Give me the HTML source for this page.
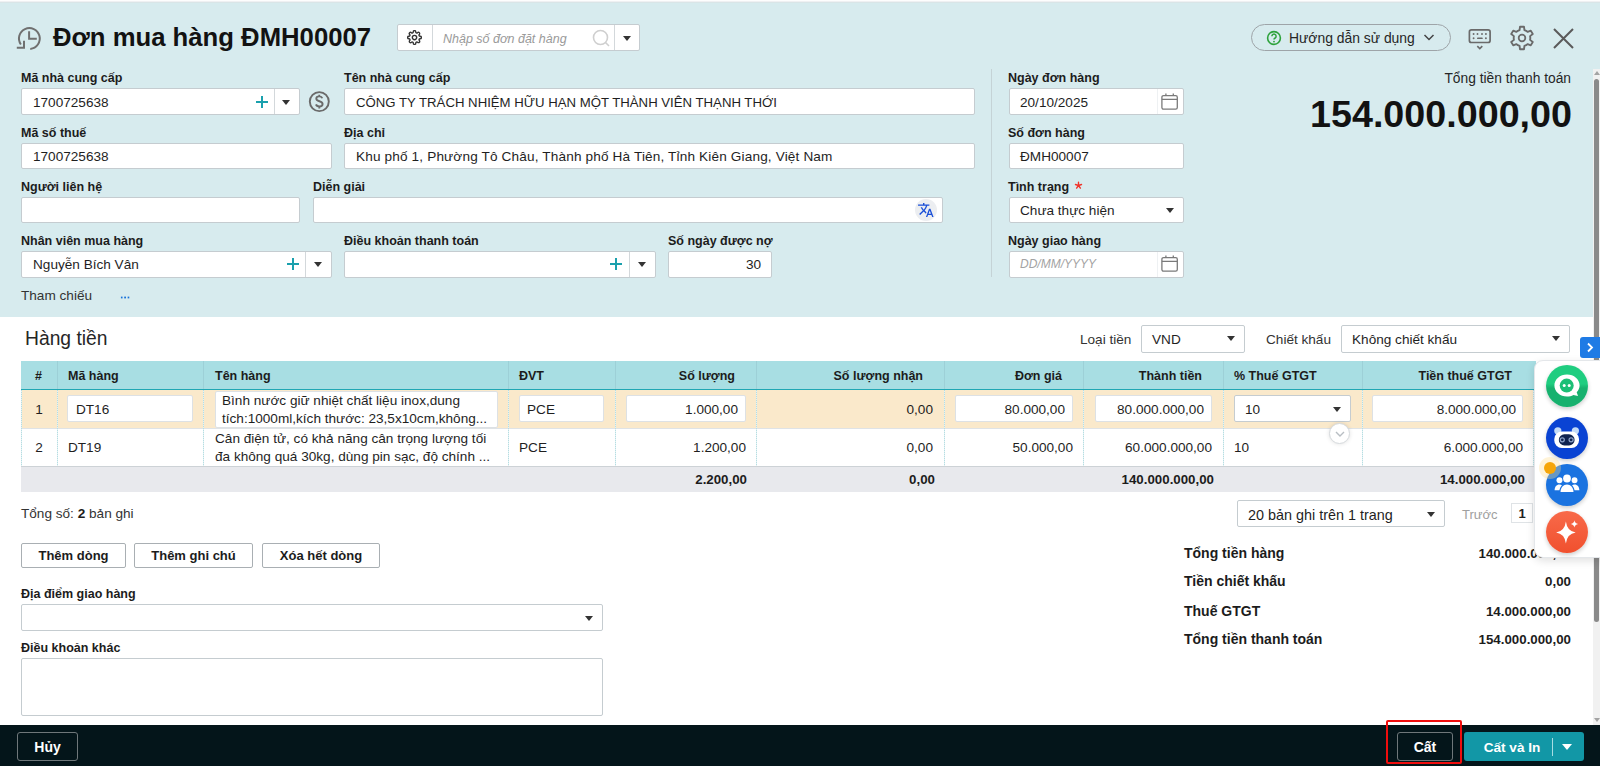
<!DOCTYPE html>
<html><head><meta charset="utf-8">
<style>
*{box-sizing:border-box;margin:0;padding:0}
html,body{width:1600px;height:766px;overflow:hidden;background:#fff;font-family:"Liberation Sans",sans-serif;color:#212121}
.a{position:absolute}
#top{left:0;top:0;width:1600px;height:3px;background:linear-gradient(#fdfdfd 0,#fdfdfd 1px,#eff0f2 1px,#eff0f2 2px,#d9e5e7 2px,#d9e5e7 3px)}
#hdr{left:0;top:3px;width:1600px;height:314px;background:#d7ebee}
.lbl{position:absolute;font-weight:bold;font-size:12.5px;line-height:16px;color:#1c1c1c;white-space:nowrap}
.inp{position:absolute;background:#fff;border:1px solid #c5ccd0;border-radius:2px;height:27px}
.txt{position:absolute;font-size:13.6px;line-height:18px;margin-top:1px;color:#1f1f1f;white-space:nowrap}
.tri{position:absolute;width:0;height:0;border-left:4.5px solid transparent;border-right:4.5px solid transparent;border-top:5px solid #333;margin:1px 0 0 .5px}
.vd{position:absolute;top:0;width:1px;height:25px;background:#d3d8db}
.plus{position:absolute;width:12px;height:12px;margin:1px}
.plus:before{content:"";position:absolute;left:5px;top:0;width:2px;height:12px;background:#1aa0ad}
.plus:after{content:"";position:absolute;left:0;top:5px;width:12px;height:2px;background:#1aa0ad}
.th{position:absolute;top:1px;height:28px;line-height:28px;font-weight:bold;font-size:12.5px;color:#1c1c1c;white-space:nowrap}
.cd{position:absolute;width:1px;background:repeating-linear-gradient(#b5dde2 0 1px,#e3f2f4 1px 2px)}
.cell{position:absolute;font-size:13.6px;color:#1f1f1f;white-space:nowrap}
.cin{position:absolute;background:#fff;border:1px solid #dde1e4;border-radius:2px;height:27px}
.sum{position:absolute;font-weight:bold;font-size:13.3px;color:#1c1c1c;white-space:nowrap}
.btn{position:absolute;height:25px;border:1px solid #a9afb3;border-radius:2px;background:#fff;font-weight:bold;font-size:13px;line-height:23px;text-align:center;color:#1c1c1c}
.slbl{position:absolute;font-weight:bold;font-size:14px;color:#1c1c1c;white-space:nowrap;left:1184px}
.sval{position:absolute;font-weight:bold;font-size:13.3px;color:#1c1c1c;white-space:nowrap;right:29px}
</style></head>
<body>
<div id="top" class="a"></div>
<div id="hdr" class="a"></div>

<!-- title -->
<svg class="a" style="left:15px;top:24px" width="28" height="28" viewBox="0 0 28 28">
 <path d="M5.85 20.5 A10.4 10.4 0 1 1 15.25 24.9" fill="none" stroke="#707070" stroke-width="2"/>
 <path d="M14.1 7.3 V14.8 H21.8" fill="none" stroke="#707070" stroke-width="2"/>
 <path d="M1.8 23.8 H9 V16.7" fill="none" stroke="#707070" stroke-width="2"/>
</svg>
<div class="a" style="left:53px;top:21px;font-size:25.7px;font-weight:bold;line-height:32px;color:#121212;white-space:nowrap">Đơn mua hàng ĐMH00007</div>

<!-- search group -->
<div class="inp" style="left:397px;top:24px;width:243px;height:27px"></div>
<div class="a" style="left:432px;top:25px;width:1px;height:25px;background:#d3d8db"></div>
<div class="a" style="left:614px;top:25px;width:1px;height:25px;background:#d3d8db"></div>
<svg class="a" style="left:407px;top:30px" width="15" height="15" viewBox="0 0 24 24"><path fill="none" stroke="#333" stroke-width="2.2" d="M12 15.5a3.5 3.5 0 1 0 0-7 3.5 3.5 0 0 0 0 7zM19.4 15a1.65 1.65 0 0 0 .33 1.82l.06.06a2 2 0 1 1-2.83 2.83l-.06-.06a1.65 1.65 0 0 0-1.82-.33 1.65 1.65 0 0 0-1 1.51V21a2 2 0 1 1-4 0v-.09A1.65 1.65 0 0 0 9 19.4a1.65 1.65 0 0 0-1.82.33l-.06.06a2 2 0 1 1-2.83-2.83l.06-.06A1.650 1.65 0 0 0 4.68 15a1.65 1.65 0 0 0-1.51-1H3a2 2 0 1 1 0-4h.09A1.65 1.65 0 0 0 4.6 9a1.65 1.65 0 0 0-.33-1.82l-.06-.06a2 2 0 1 1 2.83-2.83l.06.06A1.65 1.65 0 0 0 9 4.68a1.65 1.65 0 0 0 1-1.51V3a2 2 0 1 1 4 0v.09a1.65 1.65 0 0 0 1 1.51 1.65 1.65 0 0 0 1.82-.33l.06-.06a2 2 0 1 1 2.83 2.83l-.06.06A1.65 1.65 0 0 0 19.4 9a1.65 1.65 0 0 0 1.51 1H21a2 2 0 1 1 0 4h-.09a1.65 1.65 0 0 0-1.51 1z"/></svg>
<div class="a" style="left:443px;top:30px;font-size:12.5px;font-style:italic;color:#9a9a9a;line-height:18px;white-space:nowrap">Nhập số đơn đặt hàng</div>
<svg class="a" style="left:592px;top:29px" width="20" height="20" viewBox="0 0 20 20"><circle cx="8.5" cy="8.5" r="7" fill="none" stroke="#cfcfcf" stroke-width="1.6"/><path d="M13.5 13.5 L17 17" stroke="#cfcfcf" stroke-width="1.6"/></svg>
<div class="tri" style="left:622px;top:35px"></div>

<!-- help pill -->
<div class="a" style="left:1251px;top:24px;width:200px;height:27px;border:1px solid #9ea4a8;border-radius:14px"></div>
<svg class="a" style="left:1266px;top:30px" width="16" height="16" viewBox="0 0 16 16"><circle cx="8" cy="8" r="6.4" fill="none" stroke="#2ea23c" stroke-width="1.6"/><path d="M5.9 6.2a2.1 2.1 0 1 1 3.2 1.8c-.7.4-1.1.8-1.1 1.6" fill="none" stroke="#2ea23c" stroke-width="1.5"/><circle cx="8" cy="11.6" r=".9" fill="#2ea23c"/></svg>
<div class="a" style="left:1289px;top:29px;font-size:13.9px;line-height:18px;color:#262626;white-space:nowrap">Hướng dẫn sử dụng</div>
<svg class="a" style="left:1423px;top:33px" width="12" height="9" viewBox="0 0 12 9"><path d="M1.5 2 L6 6.5 L10.5 2" fill="none" stroke="#444" stroke-width="1.5"/></svg>

<!-- keyboard -->
<svg class="a" style="left:1466px;top:27px" width="28" height="24" viewBox="0 0 28 24"><rect x="3.4" y="2.9" width="20.7" height="12.6" rx="2" fill="none" stroke="#6a6a6a" stroke-width="1.7"/><g fill="#6a6a6a"><circle cx="7.6" cy="7" r=".95"/><circle cx="11.5" cy="7" r=".95"/><circle cx="16" cy="7" r=".95"/><circle cx="19.9" cy="7" r=".95"/><circle cx="7.6" cy="11.2" r=".95"/><circle cx="19.9" cy="11.2" r=".95"/><rect x="11" y="10.4" width="5.8" height="1.7" rx=".85"/></g><path d="M11.3 19.2 L13.8 21.6 L16.3 19.2" fill="none" stroke="#6a6a6a" stroke-width="1.6"/></svg>
<!-- gear -->
<svg class="a" style="left:1509px;top:25px" width="26" height="26" viewBox="0 0 24 25"><path d="M8.00 5.57 L9.66 4.85 L10.09 1.67 L13.91 1.67 L14.34 4.85 L16.00 5.57 L17.46 6.65 L20.43 5.43 L22.34 8.74 L19.79 10.70 L20.00 12.50 L19.79 14.30 L22.34 16.26 L20.43 19.57 L17.46 18.35 L16.00 19.43 L14.34 20.15 L13.91 23.33 L10.09 23.33 L9.66 20.15 L8.00 19.43 L6.54 18.35 L3.57 19.57 L1.66 16.26 L4.21 14.30 L4.00 12.50 L4.21 10.70 L1.66 8.74 L3.57 5.43 L6.54 6.65Z" fill="none" stroke="#6a6a6a" stroke-width="1.8" stroke-linejoin="round"/><circle cx="12" cy="12.5" r="3.2" fill="none" stroke="#6a6a6a" stroke-width="1.7"/></svg>
<!-- close -->
<svg class="a" style="left:1552px;top:27px" width="23" height="23" viewBox="0 0 23 23"><path d="M2 2 L21 21 M21 2 L2 21" stroke="#5a5a5a" stroke-width="2"/></svg>

<!-- row 1 -->
<div class="lbl" style="left:21px;top:70px">Mã nhà cung cấp</div>
<div class="inp" style="left:21px;top:88px;width:279px">
 <div class="vd" style="left:252px"></div>
</div>
<div class="txt" style="left:33px;top:93px">1700725638</div>
<div class="plus" style="left:255px;top:95px"></div>
<div class="tri" style="left:281px;top:99px"></div>
<svg class="a" style="left:307px;top:89px" width="25" height="25" viewBox="0 0 25 25"><circle cx="12.3" cy="12.6" r="9.5" fill="none" stroke="#6a6a6a" stroke-width="1.9"/><path d="M15.3 9.3c-.4-1.2-1.6-1.9-3-1.9-1.8 0-3 .9-3 2.3 0 3.2 6.3 1.9 6.3 5.3 0 1.5-1.4 2.5-3.3 2.5-1.6 0-2.9-.8-3.3-2.1M12.3 5.8v2M12.3 17.4v2" fill="none" stroke="#6a6a6a" stroke-width="1.9"/></svg>

<div class="lbl" style="left:344px;top:70px">Tên nhà cung cấp</div>
<div class="inp" style="left:344px;top:88px;width:631px"></div>
<div class="txt" style="left:356px;top:93px;font-size:13.2px">CÔNG TY TRÁCH NHIỆM HỮU HẠN MỘT THÀNH VIÊN THẠNH THỚI</div>

<div class="a" style="left:991px;top:69px;width:1px;height:208px;background:#c5d3d6"></div>

<div class="lbl" style="left:1008px;top:70px">Ngày đơn hàng</div>
<div class="inp" style="left:1009px;top:88px;width:175px"></div>
<div class="txt" style="left:1020px;top:93px">20/10/2025</div>
<div class="a" style="left:1157px;top:89px;width:1px;height:25px;background:#eef1f3"></div><svg class="a" style="left:1159px;top:91px" width="21" height="21" viewBox="0 0 21 21"><rect x="2.9" y="4.6" width="15.4" height="13.6" rx="1.6" fill="none" stroke="#7a7a7a" stroke-width="1.3"/><path d="M2.9 8.3 H18.3 M6.9 2.4 V5 M14.3 2.4 V5" stroke="#7a7a7a" stroke-width="1.3"/></svg>

<div class="a" style="left:1442px;top:70px;width:129px;text-align:right;font-size:13.8px;line-height:18px;color:#262626;white-space:nowrap">Tổng tiền thanh toán</div>
<div class="a" style="left:1250px;top:92px;width:322px;text-align:right;font-size:37.7px;font-weight:bold;line-height:44px;color:#121212;white-space:nowrap">154.000.000,00</div>

<!-- row 2 -->
<div class="lbl" style="left:21px;top:125px">Mã số thuế</div>
<div class="inp" style="left:21px;top:143px;width:311px;height:26px"></div>
<div class="txt" style="left:33px;top:147px">1700725638</div>
<div class="lbl" style="left:344px;top:125px">Địa chỉ</div>
<div class="inp" style="left:344px;top:143px;width:631px;height:26px"></div>
<div class="txt" style="left:356px;top:147px;letter-spacing:.15px">Khu phố 1, Phường Tô Châu, Thành phố Hà Tiên, Tỉnh Kiên Giang, Việt Nam</div>
<div class="lbl" style="left:1008px;top:125px">Số đơn hàng</div>
<div class="inp" style="left:1009px;top:143px;width:175px;height:26px"></div>
<div class="txt" style="left:1020px;top:147px">ĐMH00007</div>

<!-- row 3 -->
<div class="lbl" style="left:21px;top:179px">Người liên hệ</div>
<div class="inp" style="left:21px;top:197px;width:279px;height:26px"></div>
<div class="lbl" style="left:313px;top:179px">Diễn giải</div>
<div class="inp" style="left:313px;top:197px;width:630px;height:26px"></div>
<div class="a" style="left:915px;top:199px;width:22px;height:22px;border-radius:11px;background:#eceef1"></div>
<svg class="a" style="left:918px;top:203px" width="15.7" height="14.2" viewBox="1 2 22 20"><path fill="#1a4fd8" d="M12.87 15.07l-2.54-2.51.03-.03c1.74-1.94 2.98-4.17 3.71-6.53H17V4h-7V2H8v2H1v1.99h11.17C11.5 7.92 10.440 9.75 9 11.35 8.07 10.32 7.3 9.19 6.690 8h-2c.73 1.63 1.73 3.17 2.98 4.56l-5.09 5.02L4 19l5-5 3.11 3.11.76-2.04zM18.5 10h-2L12 22h2l1.12-3h4.75L21 22h2l-4.5-12zm-2.62 7l1.62-4.33L19.12 17h-3.24z"/></svg>
<div class="lbl" style="left:1008px;top:179px">Tình trạng</div>
<svg class="a" style="left:1074px;top:180.5px" width="9" height="9" viewBox="0 0 9 9"><path d="M4.50 4.50L4.50 1.30M4.50 4.50L7.54 3.51M4.50 4.50L6.38 7.09M4.50 4.50L2.62 7.09M4.50 4.50L1.46 3.51" stroke="#f0342a" stroke-width="1.4" stroke-linecap="round"/></svg>
<div class="inp" style="left:1009px;top:197px;width:175px;height:26px"></div>
<div class="txt" style="left:1020px;top:201px">Chưa thực hiện</div>
<div class="tri" style="left:1165px;top:207px"></div>

<!-- row 4 -->
<div class="lbl" style="left:21px;top:233px">Nhân viên mua hàng</div>
<div class="inp" style="left:21px;top:251px;width:311px">
 <div class="vd" style="left:283px"></div>
</div>
<div class="txt" style="left:33px;top:255px">Nguyễn Bích Vân</div>
<div class="plus" style="left:286px;top:257px"></div>
<div class="tri" style="left:313px;top:261px"></div>

<div class="lbl" style="left:344px;top:233px">Điều khoản thanh toán</div>
<div class="inp" style="left:344px;top:251px;width:312px">
 <div class="vd" style="left:284px"></div>
</div>
<div class="plus" style="left:609px;top:257px"></div>
<div class="tri" style="left:637px;top:261px"></div>

<div class="lbl" style="left:668px;top:233px">Số ngày được nợ</div>
<div class="inp" style="left:668px;top:251px;width:104px"></div>
<div class="txt" style="left:668px;top:255px;width:93px;text-align:right">30</div>

<div class="lbl" style="left:1008px;top:233px">Ngày giao hàng</div>
<div class="inp" style="left:1009px;top:251px;width:175px"></div>
<div class="a" style="left:1020px;top:256px;font-size:12px;font-style:italic;color:#a3a3a3;line-height:16px;white-space:nowrap">DD/MM/YYYY</div>
<div class="a" style="left:1157px;top:252px;width:1px;height:25px;background:#eef1f3"></div><svg class="a" style="left:1159px;top:253px" width="21" height="21" viewBox="0 0 21 21"><rect x="2.9" y="4.6" width="15.4" height="13.6" rx="1.6" fill="none" stroke="#7a7a7a" stroke-width="1.3"/><path d="M2.9 8.3 H18.3 M6.9 2.4 V5 M14.3 2.4 V5" stroke="#7a7a7a" stroke-width="1.3"/></svg>

<div class="txt" style="left:21px;top:286px;color:#333">Tham chiếu</div>
<div class="a" style="left:120px;top:296px;width:11px;height:3px;background:radial-gradient(circle,#1a73d9 0.9px,transparent 1.2px) 0 0/3.4px 3px repeat-x"></div>

<!-- Hàng tiền -->
<div class="a" style="left:25px;top:327px;font-size:19.3px;line-height:24px;color:#262626;white-space:nowrap">Hàng tiền</div>
<div class="txt" style="left:1080px;top:330px;color:#333">Loại tiền</div>
<div class="inp" style="left:1141px;top:325px;width:104px;height:28px"></div>
<div class="txt" style="left:1152px;top:330px">VND</div>
<div class="tri" style="left:1226px;top:335px"></div>
<div class="txt" style="left:1266px;top:330px;color:#333">Chiết khấu</div>
<div class="inp" style="left:1341px;top:325px;width:229px;height:28px"></div>
<div class="txt" style="left:1352px;top:330px">Không chiết khấu</div>
<div class="tri" style="left:1551px;top:335px"></div>

<!-- table -->
<div class="a" style="left:21px;top:361px;width:1515px;height:28px;background:#a8dee3">
 <div class="th" style="left:14px">#</div>
 <div class="th" style="left:47px">Mã hàng</div>
 <div class="th" style="left:194px">Tên hàng</div>
 <div class="th" style="left:498px">ĐVT</div>
 <div class="th" style="left:594px;width:120px;text-align:right">Số lượng</div>
 <div class="th" style="left:736px;width:166px;text-align:right">Số lượng nhận</div>
 <div class="th" style="left:923px;width:118px;text-align:right">Đơn giá</div>
 <div class="th" style="left:1062px;width:119px;text-align:right">Thành tiền</div>
 <div class="th" style="left:1213px">% Thuế GTGT</div>
 <div class="th" style="left:1341px;width:150px;text-align:right">Tiền thuế GTGT</div>
 <div class="a" style="left:36px;top:0;width:1px;height:28px;background:#9dd0d7"></div>
 <div class="a" style="left:182px;top:0;width:1px;height:28px;background:#9dd0d7"></div>
 <div class="a" style="left:487px;top:0;width:1px;height:28px;background:#9dd0d7"></div>
 <div class="a" style="left:594px;top:0;width:1px;height:28px;background:#9dd0d7"></div>
 <div class="a" style="left:735px;top:0;width:1px;height:28px;background:#9dd0d7"></div>
 <div class="a" style="left:923px;top:0;width:1px;height:28px;background:#9dd0d7"></div>
 <div class="a" style="left:1062px;top:0;width:1px;height:28px;background:#9dd0d7"></div>
 <div class="a" style="left:1202px;top:0;width:1px;height:28px;background:#9dd0d7"></div>
 <div class="a" style="left:1341px;top:0;width:1px;height:28px;background:#9dd0d7"></div>
</div>
<div class="a" style="left:21px;top:389px;width:1515px;height:1px;background:#20a7b4"></div>
<div class="a" style="left:21px;top:390px;width:1515px;height:38px;background:#fae9cb"></div>
<div class="a" style="left:21px;top:428px;width:1515px;height:1px;background:#dfe3e6"></div>
<div class="a" style="left:21px;top:429px;width:1515px;height:37px;background:#fff"></div>
<div class="a" style="left:21px;top:466px;width:1515px;height:1px;background:#cdd2d6"></div>
<div class="a" style="left:21px;top:467px;width:1515px;height:25px;background:#e8e9ed"></div>
<!-- dotted col dividers -->
<div class="cd" style="left:21px;top:390px;height:76px"></div>
<div class="cd" style="left:57px;top:390px;height:76px"></div>
<div class="cd" style="left:203px;top:390px;height:76px"></div>
<div class="cd" style="left:508px;top:390px;height:76px"></div>
<div class="cd" style="left:615px;top:390px;height:76px"></div>
<div class="cd" style="left:756px;top:390px;height:76px"></div>
<div class="cd" style="left:944px;top:390px;height:76px"></div>
<div class="cd" style="left:1083px;top:390px;height:76px"></div>
<div class="cd" style="left:1223px;top:390px;height:76px"></div>
<div class="cd" style="left:1362px;top:390px;height:76px"></div>
<div class="cd" style="left:1533px;top:390px;height:76px"></div>

<!-- row 1 -->
<div class="cell" style="left:21px;top:402px;width:36px;text-align:center">1</div>
<div class="cin" style="left:67px;top:395px;width:126px"></div>
<div class="cell" style="left:76px;top:402px">DT16</div>
<div class="cin" style="left:215px;top:391px;width:283px;height:37px"></div>
<div class="cell" style="left:222px;top:392px;line-height:18px">Bình nước giữ nhiệt chất liệu inox,dung<br>tích:1000ml,kích thước: 23,5x10cm,không...</div>
<div class="cin" style="left:519px;top:395px;width:85px"></div>
<div class="cell" style="left:527px;top:402px">PCE</div>
<div class="cin" style="left:626px;top:395px;width:120px"></div>
<div class="cell" style="left:626px;top:402px;width:112px;text-align:right">1.000,00</div>
<div class="cell" style="left:757px;top:402px;width:176px;text-align:right">0,00</div>
<div class="cin" style="left:955px;top:395px;width:118px"></div>
<div class="cell" style="left:955px;top:402px;width:110px;text-align:right">80.000,00</div>
<div class="cin" style="left:1095px;top:395px;width:117px"></div>
<div class="cell" style="left:1095px;top:402px;width:109px;text-align:right">80.000.000,00</div>
<div class="cin" style="left:1234px;top:395px;width:117px;border-color:#c5ccd0"></div>
<div class="cell" style="left:1245px;top:402px">10</div>
<div class="tri" style="left:1332px;top:406px"></div>
<div class="cin" style="left:1372px;top:395px;width:151px"></div>
<div class="cell" style="left:1372px;top:402px;width:144px;text-align:right">8.000.000,00</div>

<!-- row 2 -->
<div class="cell" style="left:21px;top:440px;width:36px;text-align:center">2</div>
<div class="cell" style="left:68px;top:440px">DT19</div>
<div class="cell" style="left:215px;top:430px;line-height:18px">Cân điện tử, có khả năng cân trọng lượng tối<br>đa không quá 30kg, dùng pin sạc, độ chính ...</div>
<div class="cell" style="left:519px;top:440px">PCE</div>
<div class="cell" style="left:626px;top:440px;width:120px;text-align:right">1.200,00</div>
<div class="cell" style="left:757px;top:440px;width:176px;text-align:right">0,00</div>
<div class="cell" style="left:955px;top:440px;width:118px;text-align:right">50.000,00</div>
<div class="cell" style="left:1095px;top:440px;width:117px;text-align:right">60.000.000,00</div>
<div class="cell" style="left:1234px;top:440px">10</div>
<div class="cell" style="left:1372px;top:440px;width:151px;text-align:right">6.000.000,00</div>
<!-- small chevron -->
<div class="a" style="left:1329px;top:423px;width:21px;height:21px;border-radius:50%;background:#fff;border:1px solid #d6dadd;box-shadow:0 0 4px rgba(0,0,0,.12)"></div>
<svg class="a" style="left:1334px;top:430px" width="12" height="8" viewBox="0 0 12 8"><path d="M2 2 L6 6 L10 2" fill="none" stroke="#b8bec3" stroke-width="1.4"/></svg>

<!-- summary row -->
<div class="sum" style="left:626px;top:472px;width:121px;text-align:right">2.200,00</div>
<div class="sum" style="left:757px;top:472px;width:178px;text-align:right">0,00</div>
<div class="sum" style="left:1095px;top:472px;width:119px;text-align:right">140.000.000,00</div>
<div class="sum" style="left:1372px;top:472px;width:153px;text-align:right">14.000.000,00</div>

<!-- below table -->
<div class="txt" style="left:21px;top:504px;color:#333">Tổng số: <b style="color:#1c1c1c">2</b> bản ghi</div>
<div class="inp" style="left:1237px;top:500px;width:208px;height:27px"></div>
<div class="txt" style="left:1248px;top:505px;font-size:14.4px">20 bản ghi trên 1 trang</div>
<div class="tri" style="left:1426px;top:511px"></div>
<div class="txt" style="left:1462px;top:505px;font-size:13px;color:#a0a0a0">Trước</div>
<div class="a" style="left:1511px;top:503px;width:22px;height:20px;border:1px solid #dfe3e6;background:#fff"></div>
<div class="a" style="left:1511px;top:505px;width:22px;text-align:center;font-weight:bold;font-size:13px;line-height:17px">1</div>

<div class="btn" style="left:21px;top:543px;width:105px">Thêm dòng</div>
<div class="btn" style="left:134px;top:543px;width:119px">Thêm ghi chú</div>
<div class="btn" style="left:262px;top:543px;width:118px">Xóa hết dòng</div>

<div class="lbl" style="left:21px;top:586px">Địa điểm giao hàng</div>
<div class="inp" style="left:21px;top:604px;width:582px"></div>
<div class="tri" style="left:584px;top:615px"></div>
<div class="lbl" style="left:21px;top:640px">Điều khoản khác</div>
<div class="inp" style="left:21px;top:658px;width:582px;height:58px"></div>

<!-- summary -->
<div class="slbl" style="top:545px">Tổng tiền hàng</div>
<div class="sval" style="top:546px">140.000.000,00</div>
<div class="slbl" style="top:573px">Tiền chiết khấu</div>
<div class="sval" style="top:574px">0,00</div>
<div class="slbl" style="top:603px">Thuế GTGT</div>
<div class="sval" style="top:604px">14.000.000,00</div>
<div class="slbl" style="top:631px">Tổng tiền thanh toán</div>
<div class="sval" style="top:632px">154.000.000,00</div>

<!-- scrollbar -->
<div class="a" style="left:1593px;top:69px;width:7px;height:656px;background:#f1f1f1"></div>
<div class="a" style="left:1594px;top:79px;width:5px;height:543px;background:#8a8a8a;border-radius:3px"></div>
<div class="a" style="left:1594px;top:71px;width:0;height:0;border-left:3px solid transparent;border-right:3px solid transparent;border-bottom:4px solid #a3a3a3"></div>
<div class="a" style="left:1594px;top:718px;width:0;height:0;border-left:3px solid transparent;border-right:3px solid transparent;border-top:4px solid #a3a3a3"></div>

<!-- floating panel -->
<div class="a" style="left:1534px;top:360px;width:72px;height:198px;background:#fff;border:1px solid #e4e7ea;border-radius:9px 0 0 9px;box-shadow:0 3px 8px rgba(0,0,0,.12)"></div>
<div class="a" style="left:1546px;top:365px;width:42px;height:42px;border-radius:50%;background:linear-gradient(#1fcd80 0%,#1fcd80 45%,#17b16e 55%,#17b16e 100%);box-shadow:0 2px 4px rgba(0,0,0,.2)"></div>
<svg class="a" style="left:1552px;top:371px" width="30" height="30" viewBox="0 0 30 30"><path d="M15 3.5c-7 0-12.6 4.9-12.6 11s5.6 11 12.6 11c2.4 0 4.6-.5 6.4-1.5l4.6 1-1.3-3.8c1.8-1.9 2.9-4.2 2.9-6.7 0-6.1-5.6-11-12.6-11z" fill="#fff"/><circle cx="14.7" cy="14.6" r="7" fill="#1cbf76"/><circle cx="12.2" cy="14.5" r="1.5" fill="#fff"/><circle cx="17.2" cy="14.5" r="1.5" fill="#fff"/></svg>
<div class="a" style="left:1546px;top:417px;width:42px;height:42px;border-radius:50%;background:#0a43d3;box-shadow:0 2px 4px rgba(0,0,0,.2)"></div>
<svg class="a" style="left:1552px;top:423px" width="30" height="30" viewBox="0 0 30 30"><circle cx="5.8" cy="7.8" r="3.6" fill="#c4dbf7"/><circle cx="23.4" cy="7.8" r="3.6" fill="#c4dbf7"/><rect x="2.3" y="8.6" width="24.7" height="16.4" rx="7.5" fill="#fff"/><rect x="6.8" y="11.3" width="15.8" height="11.2" rx="5.6" fill="#10234f"/><circle cx="10.3" cy="16.8" r="2.6" fill="#8ea3c9"/><circle cx="19.1" cy="16.8" r="2.6" fill="#8ea3c9"/><circle cx="10.3" cy="16.8" r="1.4" fill="#10234f"/><circle cx="19.1" cy="16.8" r="1.4" fill="#10234f"/></svg>
<div class="a" style="left:1546px;top:464px;width:42px;height:42px;border-radius:50%;background:#1a73e0;box-shadow:0 2px 4px rgba(0,0,0,.2)"></div>
<svg class="a" style="left:1552px;top:470px" width="30" height="30" viewBox="0 0 30 30"><g fill="#fff" transform="translate(15 15) scale(1.18) translate(-15 -15.5)"><circle cx="15" cy="10" r="3.3"/><circle cx="8.6" cy="11.5" r="2.5"/><circle cx="21.4" cy="11.5" r="2.5"/><path d="M9.5 21.5c0-4 2.5-6.5 5.5-6.5s5.5 2.500 5.5 6.5z"/><path d="M4.5 20c0-3 1.7-5 4-5 1 0 1.7.3 2.2.7-1.2 1.2-1.9 2.8-2.1 4.3z"/><path d="M25.5 20c0-3-1.7-5-4-5-1 0-1.7.3-2.2.7 1.2 1.2 1.9 2.8 2.1 4.3z"/></g></svg>
<div class="a" style="left:1539px;top:457px;width:22px;height:22px;border-radius:50%;background:rgba(255,220,140,.35)"></div>
<div class="a" style="left:1544px;top:462px;width:12px;height:12px;border-radius:50%;background:#f6a609"></div>
<div class="a" style="left:1546px;top:511px;width:42px;height:42px;border-radius:50%;background:linear-gradient(#f86a4a,#f0502e);box-shadow:0 2px 4px rgba(0,0,0,.2)"></div>
<svg class="a" style="left:1552px;top:517px" width="30" height="30" viewBox="0 0 30 30"><g fill="#fff" transform="translate(14.5 15.5) scale(1.22) translate(-14.5 -16)"><path d="M14 7 Q15 15 22 16 Q15 17 14 25 Q13 17 6 16 Q13 15 14 7z"/><path d="M21 6 Q21.4 8.6 24 9 Q21.4 9.4 21 12 Q20.6 9.4 18 9 Q20.6 8.6 21 6z"/></g></svg>
<!-- blue tab -->
<div class="a" style="left:1580px;top:337px;width:22px;height:21px;background:#1f7be5;border-radius:3px 0 0 3px"></div>
<svg class="a" style="left:1585px;top:342px" width="10" height="11" viewBox="0 0 10 11"><path d="M3 1.5 L7 5.5 L3 9.5" fill="none" stroke="#fff" stroke-width="1.8"/></svg>

<!-- footer -->
<div class="a" style="left:0;top:725px;width:1600px;height:41px;background:#04151a"></div>
<div class="a" style="left:17px;top:732px;width:61px;height:29px;border:1px solid #6f777a;border-radius:3px;color:#fff;font-weight:bold;font-size:14px;line-height:29px;text-align:center">Hủy</div>
<div class="a" style="left:1397px;top:732px;width:56px;height:29px;border:1px solid #6f777a;border-radius:3px;color:#fff;font-weight:bold;font-size:14px;line-height:29px;text-align:center">Cất</div>
<div class="a" style="left:1386px;top:720px;width:76px;height:44px;border:2px solid #f00d0d;border-radius:2px"></div>
<div class="a" style="left:1464px;top:732px;width:120px;height:29px;background:#1297a6;border-radius:3px"></div>
<div class="a" style="left:1472px;top:732px;width:80px;color:#fff;font-weight:bold;font-size:13.6px;line-height:31px;text-align:center">Cất và In</div>
<div class="a" style="left:1552px;top:738px;width:1px;height:18px;background:#a8dde3"></div>
<div class="a" style="left:1562px;top:744px;width:0;height:0;border-left:5px solid transparent;border-right:5px solid transparent;border-top:6px solid #fff"></div>
</body></html>
